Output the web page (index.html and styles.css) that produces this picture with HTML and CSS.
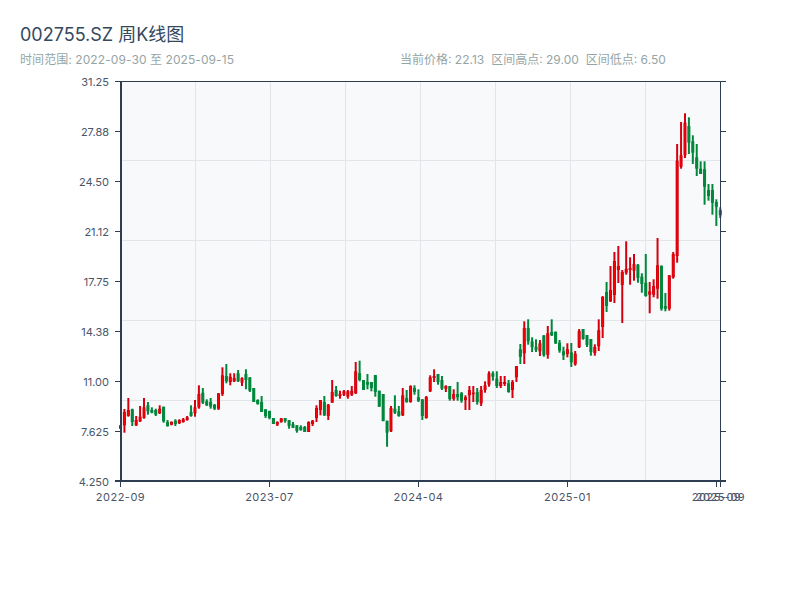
FILE: index.html
```html
<!DOCTYPE html>
<html lang="zh">
<head>
    <meta charset="UTF-8">
    <meta name="viewport" content="width=device-width, initial-scale=1.0">
    <title>002755.SZ 周K线图</title>
    <link rel="stylesheet" href="styles.css">
</head>
<body>
    <div class="chart-header">
        <h1 class="chart-title">002755.SZ 周K线图</h1>
        <div class="chart-meta">
            <span class="chart-range">时间范围: 2022-09-30 至 2025-09-15</span>
            <div class="chart-stats">
                <span>当前价格: 22.13</span>
                <span>区间高点: 29.00</span>
                <span>区间低点: 6.50</span>
            </div>
        </div>
    </div>
    <svg class="chart" id="chart" viewBox="0 70 800 450" width="800" height="450"></svg>

    <script>
        const svg = document.getElementById('chart');
        const SVG_NS = 'http://www.w3.org/2000/svg';

        const plot = { left: 121, right: 720.5, top: 81, bottom: 481 };
        const candleStep = 3.92;

        const yLabels = ['31.25', '27.88', '24.50', '21.12', '17.75', '14.38', '11.00', '7.625', '4.250'];
        const xLabels = [[0, '2022-09'], [38, '2023-07'], [76, '2024-04'], [114, '2025-01'], [152, '2025-09'], [153, '2025-09']];

        // wick top, wick bottom, body top, body bottom, 1 = up (red)
        const candles = [
            [425.3,428.7,425.3,428.7,1],[409,432.7,412,425.3,1],[398,416.7,410,416,1],[408.7,426,409.3,422,0],
            [416,426,420,425.3,1],[406,422,416.7,421.3,1],[398,418.7,407.3,418,1],[402,414.7,405.3,411.3,0],
            [407.3,413.3,410,412.7,0],[408.7,416,410,414.7,0],[405.3,414,408.7,413.3,1],[406.7,422.7,406.7,421.3,0],
            [420,426.7,422,426,0],[421.3,425.3,422,424.7,1],[419.3,426,420.7,424,0],[419.3,424,420,423.3,1],
            [418,422.7,419.3,422,1],[416,420.7,417.3,420,1],[405.3,416.7,412,416,0],[400,416.7,407.3,413.3,1],
            [385.3,408.7,394,407.3,1],[388,404,392.7,402.7,0],[399.3,406,401.3,405.3,0],[398,408.7,402,406.7,0],
            [404,410,404.7,408.7,0],[393.3,410,393.3,408.7,1],[367.3,396,375.3,394,1],[364,383.3,376,381.3,0],
            [373.3,385.3,376.7,382,1],[373.3,382,378,381.3,1],[370,382,373.3,381.3,0],[377.3,386,378,382.7,1],
            [369.3,389.3,374,380,0],[377.3,392,377.3,390.7,0],[388,402,388,402,0],[399.3,404.7,400,404,0],
            [396,412,402,412,0],[409.3,418,409.3,416,0],[410.7,419.3,411,418,0],[418,424,418,424,0],
            [421.3,426,422,424.7,1],[418,422.7,418.3,422,1],[418,422.7,418,421,0],[420,428.7,420,426,0],
            [422,428,424,428,0],[425.3,432.7,425.3,431,0],[425.3,430.7,427,430,0],[426,432,427,432,0],
            [421.3,432,422,432,1],[420,426,420.7,424,1],[405.3,422,408,418,1],[400,415.3,400,410,1],
            [396,416,402,415.3,0],[404,420,404.7,416,1],[380,402.7,392,402.7,1],[386,396.7,390,396,0],
            [390.7,398.7,394,396,1],[390,396,391.3,394.7,1],[390,398.7,391.3,396.7,1],[386,396,390.7,394.7,1],
            [362,394,371.3,393.3,1],[360.7,381.3,373.3,380,0],[380,390,380,390,0],[374,389.3,382,384.7,0],
            [382,391.3,382,388,0],[375,396.7,375,392,0],[390.7,406.7,390.7,406.7,0],[394,421.3,394,421,0],
            [420.7,446.7,420.7,432.7,0],[406,432,408,431.3,1],[395.3,414,408.7,412.7,0],[406,416.7,411.3,416,0],
            [388,416,395.3,415.3,1],[390,402.7,398,402,0],[385.3,402.7,386,402,1],[385.3,394.7,388,392,0],
            [389.3,402,397.3,400.7,0],[399.3,420,399.3,416,0],[396,418.7,397,418,1],[375.3,392,377.3,391.3,1],
            [369.3,382,376,378,1],[374,384.7,374,382,0],[376,390,380,388.7,0],[385.3,392,386,388.7,1],
            [386,400.7,386,399,0],[389.3,400.7,394,398.7,1],[382,400.7,394,397.3,0],[392,402.7,393.3,400.7,0],
            [395.3,410,397.3,400,1],[386,410,390,395.3,1],[386,402,392.7,394,1],[388,404.7,392,402,0],
            [386,406,390,403.3,1],[381.3,392.7,385.3,390,1],[371.3,386.7,373.3,384.7,1],[371.3,380.7,373.3,376.7,0],
            [371.3,388,378.7,386,0],[376,388,382,386,1],[376,386,382,384,1],[380,392.7,383.3,392,0],
            [380,398,382,390,1],[366,382,366,377.3,1],[344,364,349.3,356.7,0],[321.3,364,328,353.3,1],
            [319.3,344.7,328,341.3,0],[337.3,352,341.3,347.3,0],[339.3,352,346.7,350,0],[340,356,343.3,351.3,1],
            [335.3,356.7,335.3,355.3,0],[326,358.7,333.3,354.7,1],[319.3,336,332,335.3,0],[331.3,344,332,343.3,0],
            [340,352.7,342.7,350.7,0],[346.7,360,351.3,355.3,0],[343.3,357.3,349.3,354,1],[343,367,352.3,362.3,0],
            [351,365.7,353.7,364.3,1],[329,348,331,347.3,1],[329,339.7,329,339,0],[335,347,335,345,0],
            [339,355.7,339,352,0],[344.3,355.7,347,353,1],[319.3,351,330.3,346.3,1],[296,338,297,327,1],
            [282,312,292,306,0],[266,302,290,301.3,1],[252,303,261,295,1],[246,283,266,270,1],
            [270,323,272,285,1],[241.3,274.7,269,272.7,1],[257.3,284.7,268,270,1],[254,280.7,264,270.7,1],
            [264,282.7,264.7,278,0],[273.3,292.7,276.7,284,0],[254,296.7,282.7,296,0],[282,313.3,291.3,294.7,1],
            [279.3,297.3,286,294.7,1],[238,298.7,265.3,288.7,1],[265.3,310.7,266,308.7,0],[293,311.3,306,308.7,0],
            [275.3,310.7,275.3,308.7,1],[252,278.7,254,277.3,1],[144,262.7,160.7,256,1],[122,168.7,155.3,166.7,1],
            [113.3,158,122.7,155.3,1],[117.3,154,126,142.7,0],[135.3,164,141.3,152.7,0],[144,176,157.3,168.7,0],
            [161.3,174,168.7,174,0],[161.3,204.7,169.3,186.7,0],[184,200.7,190,196,0],[184,214.7,190,202.7,0],
            [199.3,226,202,206.7,0],[207.3,218,210,215.3,0]
        ];

        function add(tag, cls, attrs) {
            const el = document.createElementNS(SVG_NS, tag);
            el.setAttribute('class', cls);
            Object.keys(attrs).forEach((key) => el.setAttribute(key, attrs[key]));
            svg.appendChild(el);
            return el;
        }

        function candleX(index) {
            return 120.5 + index * candleStep;
        }

        // background and grid
        add('rect', 'plot-bg', { x: plot.left, y: plot.top, width: plot.right - plot.left, height: plot.bottom - plot.top });
        for (let x = 195.5; x < plot.right; x += 75) {
            add('line', 'grid', { x1: x, x2: x, y1: plot.top, y2: plot.bottom });
        }
        for (let y = 160.5; y < plot.bottom; y += 80) {
            add('line', 'grid', { x1: plot.left, x2: plot.right, y1: y, y2: y });
        }

        // candles
        candles.forEach((c, i) => {
            const x = candleX(i);
            const color = c[4] ? 'up' : 'down';
            add('line', 'wick wick-' + color, { x1: x, x2: x, y1: c[0], y2: c[1] });
            add('rect', 'body body-' + color, { x: x - 1, y: c[2] + 0.5, width: 2, height: Math.max(c[3] - c[2] - 1, 0.5) });
        });

        // axes
        add('line', 'axis', { x1: 115, x2: 726, y1: 81.5, y2: 81.5 });
        add('line', 'axis', { x1: 720.5, x2: 720.5, y1: 81, y2: 481 });
        add('line', 'axis axis-main', { x1: 121, x2: 121, y1: 81, y2: 482 });
        add('line', 'axis axis-main', { x1: 115, x2: 726, y1: 481, y2: 481 });

        yLabels.forEach((label, i) => {
            const y = plot.top + i * 50 + 0.5;
            add('line', 'tick', { x1: 115, x2: 120, y1: y, y2: y });
            add('line', 'tick', { x1: 721, x2: 726, y1: y, y2: y });
            add('text', 'axis-label', { x: 109, y: y + 4, 'text-anchor': 'end' }).textContent = label;
        });

        xLabels.forEach(([index, label]) => {
            const x = Math.floor(candleX(index)) + 0.5;
            add('line', 'tick', { x1: x, x2: x, y1: 482, y2: 487 });
            add('text', 'axis-label axis-label-x', { x: x, y: 501, 'text-anchor': 'middle' }).textContent = label;
        });
    </script>
</body>
</html>
```

FILE: styles.css
```css
body {
    font-family: 'Inter', 'Noto Sans CJK SC', sans-serif;
    background-color: #fff;
    margin: 0;
}
.chart-header {
    height: 70px;
    padding: 25px 20px 0;
    box-sizing: border-box;
}
.chart-title {
    font-size: 18px;
    line-height: 20px;
    font-weight: 400;
    color: #34495e;
    margin: 0 0 7px;
}
.chart-meta {
    display: grid;
    grid-template-columns: 1fr 1fr;
    font-size: 12px;
    line-height: 16px;
    color: #95a5a6;
}
.chart-range {
    letter-spacing: 0.08px;
}
.chart-stats {
    display: flex;
    gap: 7px;
}
.chart {
    display: block;
}
.plot-bg {
    fill: #f8f9fa;
}
.grid {
    stroke: #e2e5e9;
    stroke-width: 1;
}
.wick {
    stroke-width: 2;
}
.wick-up {
    stroke: #d4000f;
}
.wick-down {
    stroke: #00873c;
}
.body {
    stroke-width: 1;
}
.body-up {
    fill: #ff0000;
    stroke: #d4000f;
}
.body-down {
    fill: #00873c;
    stroke: #00873c;
}
.axis {
    stroke: #2c3e50;
    stroke-width: 1;
}
.axis-main {
    stroke-width: 2;
}
.tick {
    stroke: #2c3e50;
    stroke-width: 1;
}
.axis-label {
    font-size: 11px;
    fill: #4a5568;
}
.axis-label-x {
    letter-spacing: 0.5px;
}
```
